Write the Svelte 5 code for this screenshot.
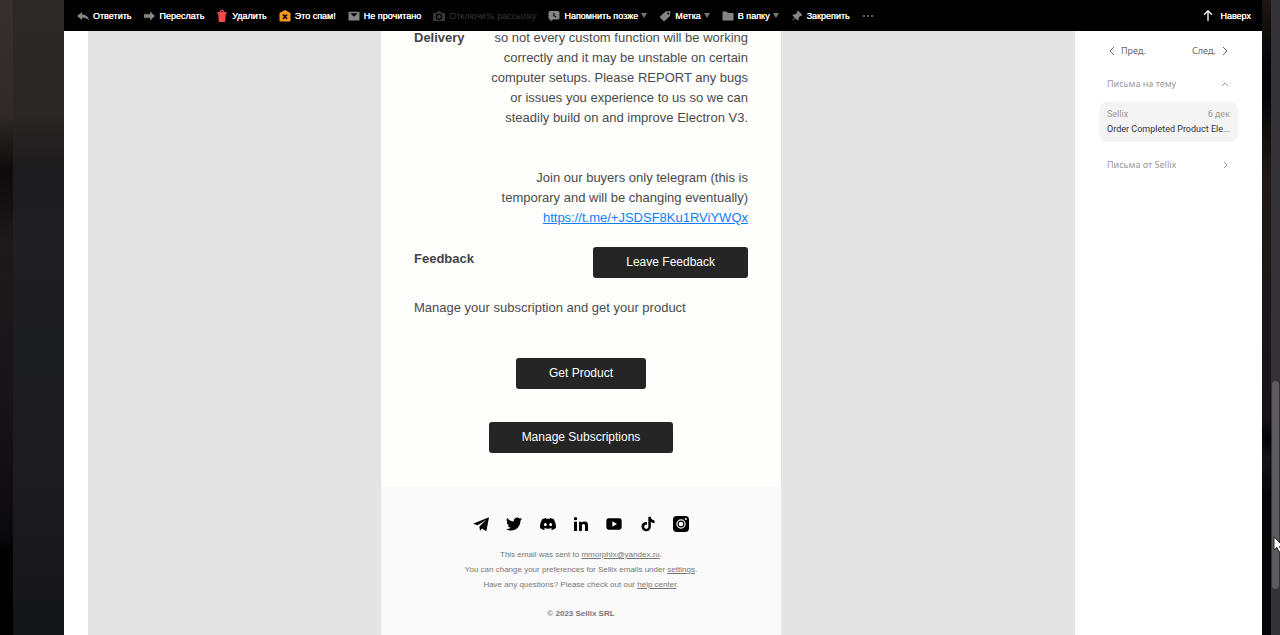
<script>
let tools = [
    {name: "Ответить", d: "M0 6 L5 2 V4.4 C9 4.4 11.5 6.5 12 10.5 C10 8.3 8 7.8 5 7.8 V10 Z"},
    {name: "Переслать", d: "M1 4.2 H7 V1.6 L12 6 L7 10.4 V7.8 H1 Z"},
    {name: "Удалить", color: "#ef4b4f", d: "M1.5 2 H4 V1.2 Q4 0 5.2 0 H6.8 Q8 0 8 1.2 V2 H10.5 V4 H9.8 L9.2 12 H2.8 L2.2 4 H1.5 Z M5 1.2 V2 H7 V1.2 Z"},
    {name: "Это спам!", color: "#f79a1e", d: "M6 0 L11.5 3 V10.5 Q11.5 11.5 10.5 11.5 H1.5 Q.5 11.5 .5 10.5 V3 Z M3.4 5 L5 6.7 L3.4 8.4 L4.5 9.5 L6 7.8 L7.5 9.5 L8.6 8.4 L7 6.7 L8.6 5 L7.5 3.9 L6 5.6 L4.5 3.9 Z"},
    {name: "Не прочитано", d: "M.5 1.8 H11.5 V10.5 H.5 Z M2.3 3.2 L6 6.8 L9.7 3.2 Z"},
    {name: "Отключить рассылку", disabled: true, d: "M6 .5 L9 3 H11 Q12 3 12 4 V11 H0 V4 Q0 3 1 3 H3 Z M6 3.6 A3.2 3.2 0 1 0 6 10 A3.2 3.2 0 1 0 6 3.6 Z M6 4.8 A2 2 0 1 1 6 8.8 A2 2 0 1 1 6 4.8 Z"},
    {name: "Напомнить позже", menu: true, d: "M2 1 H10 Q11.5 1 11.5 2.5 V8 Q11.5 9.5 10 9.5 H5 L2.5 11.5 V9.5 H2 Q.5 9.5 .5 8 V2.5 Q.5 1 2 1 Z M5.3 3 V6 L8 7.4 L8.5 6.4 L6.5 5.4 V3 Z"},
    {name: "Метка", menu: true, d: "M6.5 1.5 L11.5 1 L11 6 L5 11.5 L.5 7 Z M9.2 2.4 A1 1 0 1 0 9.2 4.4 A1 1 0 1 0 9.2 2.4 Z"},
    {name: "В папку", menu: true, d: "M.5 1.5 H4.5 L6 3 H11.5 V10.5 H.5 Z"},
    {name: "Закрепить", d: "M7 .5 L11.5 5 L10.3 6 L9.5 5.8 L7.8 7.6 L7.6 10 L6.6 10.6 L4.2 8.2 L.5 11.5 L3.5 7.5 L1.4 5.4 L2 4.4 L4.4 4.2 L6.2 2.5 L6 1.5 Z"},
]

let socials = [
    {name: "Telegram", d: "M24 2 L20 23 L13.5 18.6 L10.5 22 L9.5 15.8 L20 5.5 L7 14 L0 11.6 Z"},
    {name: "Twitter", d: "M23.953 4.57a10 10 0 01-2.825.775 4.958 4.958 0 002.163-2.723c-.951.555-2.005.959-3.127 1.184a4.92 4.92 0 00-8.384 4.482C7.69 8.095 4.067 6.13 1.64 3.162a4.822 4.822 0 00-.666 2.475c0 1.71.87 3.213 2.188 4.096a4.904 4.904 0 01-2.228-.616v.06a4.923 4.923 0 003.946 4.827 4.996 4.996 0 01-2.212.085 4.936 4.936 0 004.604 3.417 9.867 9.867 0 01-6.102 2.105c-.39 0-.779-.023-1.17-.067a13.995 13.995 0 007.557 2.209c9.053 0 13.998-7.496 13.998-13.985 0-.21 0-.42-.015-.63A9.935 9.935 0 0024 4.59z"},
    {name: "Discord", d: "M20.3 4.4a19.8 19.8 0 00-4.9-1.5l-.7 1.3a18 18 0 00-5.4 0l-.7-1.3a19.7 19.7 0 00-4.9 1.5C.5 9-.3 13.6 .1 18.1a20 20 0 006 3l1.3-2.1-2-1 .5-.4c3.9 1.8 8.2 1.8 12.1 0l.5.4-2 1 1.3 2.1a20 20 0 006-3c.5-5.2-.8-9.7-3.5-13.7zM8 15.3c-1.2 0-2.2-1.1-2.2-2.4s1-2.4 2.2-2.4 2.2 1.1 2.2 2.4-1 2.4-2.2 2.4zm8 0c-1.2 0-2.2-1.1-2.2-2.4s1-2.4 2.2-2.4 2.2 1.1 2.2 2.4-1 2.4-2.2 2.4z"},
    {name: "LinkedIn", d: "M1.5 8.5 H6 V22.5 H1.5 Z M3.8 1.5 A2.5 2.5 0 1 1 3.8 6.5 A2.5 2.5 0 1 1 3.8 1.5 Z M9 8.5 H13.2 V10.4 C14 8.8 15.5 8.2 17.3 8.2 C21.5 8.2 22.5 10.7 22.5 14 V22.5 H18 V15 C18 13 17.6 11.9 15.9 11.9 C14 11.9 13.4 13 13.4 15 V22.5 H9 Z"},
    {name: "YouTube", d: "M4 3.5 H20 Q23.5 3.5 23.5 7 V17 Q23.5 20.5 20 20.5 H4 Q.5 20.5 .5 17 V7 Q.5 3.5 4 3.5 Z M9.5 8 V16 L16.5 12 Z"},
    {name: "TikTok", d: "M12.5 1c1.3 0 2.5 0 3.7 0 .1 1.5.6 2.9 1.6 3.9 1.1 1 2.5 1.5 4 1.7v4c-1.4-.1-2.7-.4-4-1l-1.5-.8v7.4c-.1 1.3-.5 2.6-1.3 3.7-1.2 1.8-3.3 3-5.5 3-1.4.1-2.7-.3-3.8-1-1.9-1.1-3.2-3.1-3.4-5.3v-1.4c.2-1.8 1-3.5 2.4-4.6 1.6-1.4 3.7-2 5.7-1.6v4.2c-.9-.3-2-.2-2.8.3-1 .8-1.5 1.9-1.3 3.1.2 1.5 1.6 2.8 3.2 2.7 1.5 0 2.9-1.3 3-2.8z"},
    {name: "Instagram", d: "M5.5 0 H18.5 Q24 0 24 5.5 V18.5 Q24 24 18.5 24 H5.5 Q0 24 0 18.5 V5.5 Q0 0 5.5 0 Z M12 5 A7 7 0 1 0 12 19 A7 7 0 1 0 12 5 Z M12 6.8 A5.2 5.2 0 1 1 12 17.2 A5.2 5.2 0 1 1 12 6.8 Z M12 8.5 A3.5 3.5 0 1 0 12 15.5 A3.5 3.5 0 1 0 12 8.5 Z M19.3 3 A1.5 1.5 0 1 0 19.3 6 A1.5 1.5 0 1 0 19.3 3 Z"},
]

let open = true
const toggleThread = () => {
    open = !open
}
const toTop = () => {
    window.scrollTo(0, 0)
}
</script>

<div class="desktop">
<div class="edge"></div>
<div class="rail"></div>

<div class="mail">
    <header class="toolbar">
        {#each tools as tool}
        <button class="tool" disabled={tool.disabled}>
            <svg viewBox="0 0 12 12" fill={tool.color || "currentColor"} fill-rule="evenodd"><path d={tool.d} /></svg>
            <span>{tool.name}</span>
            {#if tool.menu}<i class="caret"></i>{/if}
        </button>
        {/each}
        <button class="tool" aria-label="Ещё">
            <svg viewBox="0 0 12 12" fill="currentColor"><circle cx="2" cy="6" r="1" /><circle cx="6" cy="6" r="1" /><circle cx="10" cy="6" r="1" /></svg>
        </button>
        <button class="tool top" on:click={toTop}>
            <svg viewBox="0 0 12 12" fill="none" stroke="#fff" stroke-width="1.3"><path d="M6 11 V1 M2 4.8 L6 .8 L10 4.8" /></svg>
            <span>Наверх</span>
        </button>
    </header>

    <div class="content">
        <main class="reader">
            <article class="letter">
                <div class="body">
                    <section class="row">
                        <strong>Delivery</strong>
                        <div class="delivery">
                            <p>so not every custom function will be working<br>correctly and it may be unstable on certain<br>computer setups. Please REPORT any bugs<br>or issues you experience to us so we can<br>steadily build on and improve Electron V3.</p>
                            <p>Join our buyers only telegram (this is<br>temporary and will be changing eventually)<br><a href="https://t.me/+JSDSF8Ku1RViYWQx">https://t.me/+JSDSF8Ku1RViYWQx</a></p>
                        </div>
                    </section>
                    <section class="row feedback">
                        <strong>Feedback</strong>
                        <button class="action">Leave Feedback</button>
                    </section>
                    <p>Manage your subscription and get your product</p>
                    <div class="actions">
                        <button class="action">Get Product</button>
                        <button class="action">Manage Subscriptions</button>
                    </div>
                </div>
                <footer>
                    <nav class="socials">
                        {#each socials as social}
                        <a href="#{social.name}" aria-label={social.name}>
                            <svg viewBox="0 0 24 24" fill-rule="evenodd"><path d={social.d} /></svg>
                        </a>
                        {/each}
                    </nav>
                    <p>This email was sent to <a href="mailto:mmorphix@yandex.ru">mmorphix@yandex.ru</a>.</p>
                    <p>You can change your preferences for Sellix emails under <a href="#settings">settings</a>.</p>
                    <p>Have any questions? Please check out our <a href="#help">help center</a>.</p>
                    <p class="copyright">© 2023 Sellix SRL</p>
                </footer>
            </article>
        </main>

        <aside>
            <nav class="pager">
                <button><svg viewBox="0 0 8 8"><path d="M6 0 L2 4 L6 8" /></svg> Пред.</button>
                <button>След. <svg viewBox="0 0 8 8"><path d="M2 0 L6 4 L2 8" /></svg></button>
            </nav>
            <button class="group" on:click={toggleThread}>
                Письма на тему
                <svg viewBox="0 0 8 8"><path d={open ? "M1 6 L4 3 L7 6" : "M3 1 L6 4 L3 7"} /></svg>
            </button>
            {#if open}
            <a class="card" href="#order">
                <span class="meta"><span>Sellix</span><time>6 дек</time></span>
                <span class="subject">Order Completed Product Ele...</span>
            </a>
            {/if}
            <button class="group">
                Письма от Sellix
                <svg viewBox="0 0 8 8"><path d="M3 1 L6 4 L3 7" /></svg>
            </button>
        </aside>
    </div>
</div>

<div class="wallpaper"></div>
<div class="scrollbar"><div class="thumb"></div></div>
<svg class="cursor" viewBox="0 0 12 18"><path d="M1 1 V14 L4 11.3 L6 16 L8.5 15 L6.5 10.5 H10.5 Z" /></svg>
</div>

<style>
:global(body) {
    margin: 0;
    background: #000;
}

.desktop {
    position: relative;
    display: grid;
    grid-template-columns: 13px 51px 1fr 9px 9px;
    min-height: 100vh;
    overflow: hidden;
    font-family: "Liberation Sans", Arial, sans-serif;
}

.edge {
    background: linear-gradient(#39302d 0, #302927 18%, #0d0a0a 27%, #1e1918 38%, #1a141a 60%, #100d12 78%, #08080c 85%, #000 87%);
}

.rail {
    background: linear-gradient(#2c2826 0, #292624 18%, #1c1b1d 27%, #1f1e21 38%, #1b1c1d 55%, #1c1b20 75%, #19191c 86%, #141516 100%);
}

.wallpaper {
    background: linear-gradient(#1c1514 0, #060505 10%, #050404 15%, #201918 28%, #171216 66%, #050406 69%, #17121a 72%, #050507 78%, #050506 100%);
}

button {
    border: 0;
    padding: 0;
    background: none;
    font: inherit;
    color: inherit;
    cursor: pointer;
}

p {
    margin: 0;
}

.mail {
    display: flex;
    flex-direction: column;
    background: #fff;
}

.toolbar {
    display: flex;
    align-items: center;
    gap: 12px;
    height: 31px;
    padding: 0 11px 0 13px;
    background: #000;
}

.tool {
    display: flex;
    align-items: center;
    gap: 4px;
    font-size: 9px;
    line-height: 12px;
    white-space: nowrap;
    color: #858585;
}

.tool span {
    color: #fff;
    text-shadow: 0 0 #fff;
}

.tool:disabled, .tool:disabled span {
    color: #383838;
    text-shadow: none;
}

.tool svg {
    width: 12px;
    height: 12px;
}

.top {
    margin-left: auto;
    gap: 6px;
}

.caret {
    margin-left: -1px;
    border: 3px solid transparent;
    border-top: 5px solid #777;
    border-bottom: 0;
}

.content {
    flex: 1;
    display: flex;
}

.reader {
    flex: 1;
    display: flex;
    justify-content: center;
    margin-left: 24px;
    padding-right: 1px;
    background: #e4e4e4;
}

.letter {
    display: flex;
    flex-direction: column;
    width: 400px;
    background: #fefefd;
    color: #4b4b4b;
    font-size: 13px;
    line-height: 20px;
}

.body {
    margin-top: -3px; /* first line sits right under the toolbar */
    padding: 0 33px 33px;
}

.row {
    display: flex;
    justify-content: space-between;
}

.row strong {
    color: #444;
}

.delivery {
    display: grid;
    gap: 40px;
    text-align: right;
}

.delivery a {
    color: #0f80fa;
}

.feedback {
    margin: 19px 0 20px;
}

.feedback strong {
    padding-top: 2px;
}

.action {
    height: 31px;
    padding: 0 33px 2px;
    border-radius: 3px;
    background: #252525;
    color: #fff;
    font-size: 12px;
}

.actions {
    display: flex;
    flex-direction: column;
    align-items: center;
    gap: 33px;
    margin-top: 40px;
}

footer {
    flex: 1;
    padding: 30px 0 14px;
    background: #fafafa;
    color: #777;
    font-size: 8px;
    line-height: 15px;
    text-align: center;
}

footer a {
    color: inherit;
}

.socials {
    display: flex;
    justify-content: space-between;
    width: 216px;
    margin: 0 auto 15px;
}

.socials svg {
    display: block;
    width: 16px;
    height: 16px;
    fill: #000;
}

.copyright {
    margin-top: 14px;
    font-weight: bold;
}

aside {
    width: 139px;
    padding: 10px 24px;
    color: #999;
    font-family: "Noto Sans", sans-serif;
    font-size: 9px;
    line-height: 20px;
}

aside svg {
    width: 8px;
    height: 8px;
    fill: none;
    stroke: currentColor;
}

.pager {
    display: flex;
    justify-content: space-between;
    padding: 0 9px;
    color: #666;
}

.pager button {
    display: flex;
    align-items: center;
    gap: 5px;
}

.group {
    display: flex;
    justify-content: space-between;
    align-items: center;
    width: 100%;
    margin: 13px 0 8px;
    padding: 0 9px 0 8px;
}

.card {
    display: block;
    padding: 5px 8px;
    border-radius: 8px;
    background: #f4f4f4;
    color: #333;
    font-family: Roboto, sans-serif;
    line-height: 15px;
    text-decoration: none;
}

.meta {
    display: flex;
    justify-content: space-between;
    color: #999;
}

.subject {
    display: block;
    white-space: nowrap;
}

.scrollbar {
    display: grid;
    grid-template-rows: 381fr 208fr 46fr;
    padding: 0 1px;
    background: #333236;
}

.thumb {
    grid-row: 2;
    border-radius: 4px;
    background: #5c5b5f;
}

.cursor {
    position: absolute;
    top: 536px;
    right: -5px;
    width: 12px;
    height: 18px;
    fill: #fff;
    stroke: #222;
}
</style>
